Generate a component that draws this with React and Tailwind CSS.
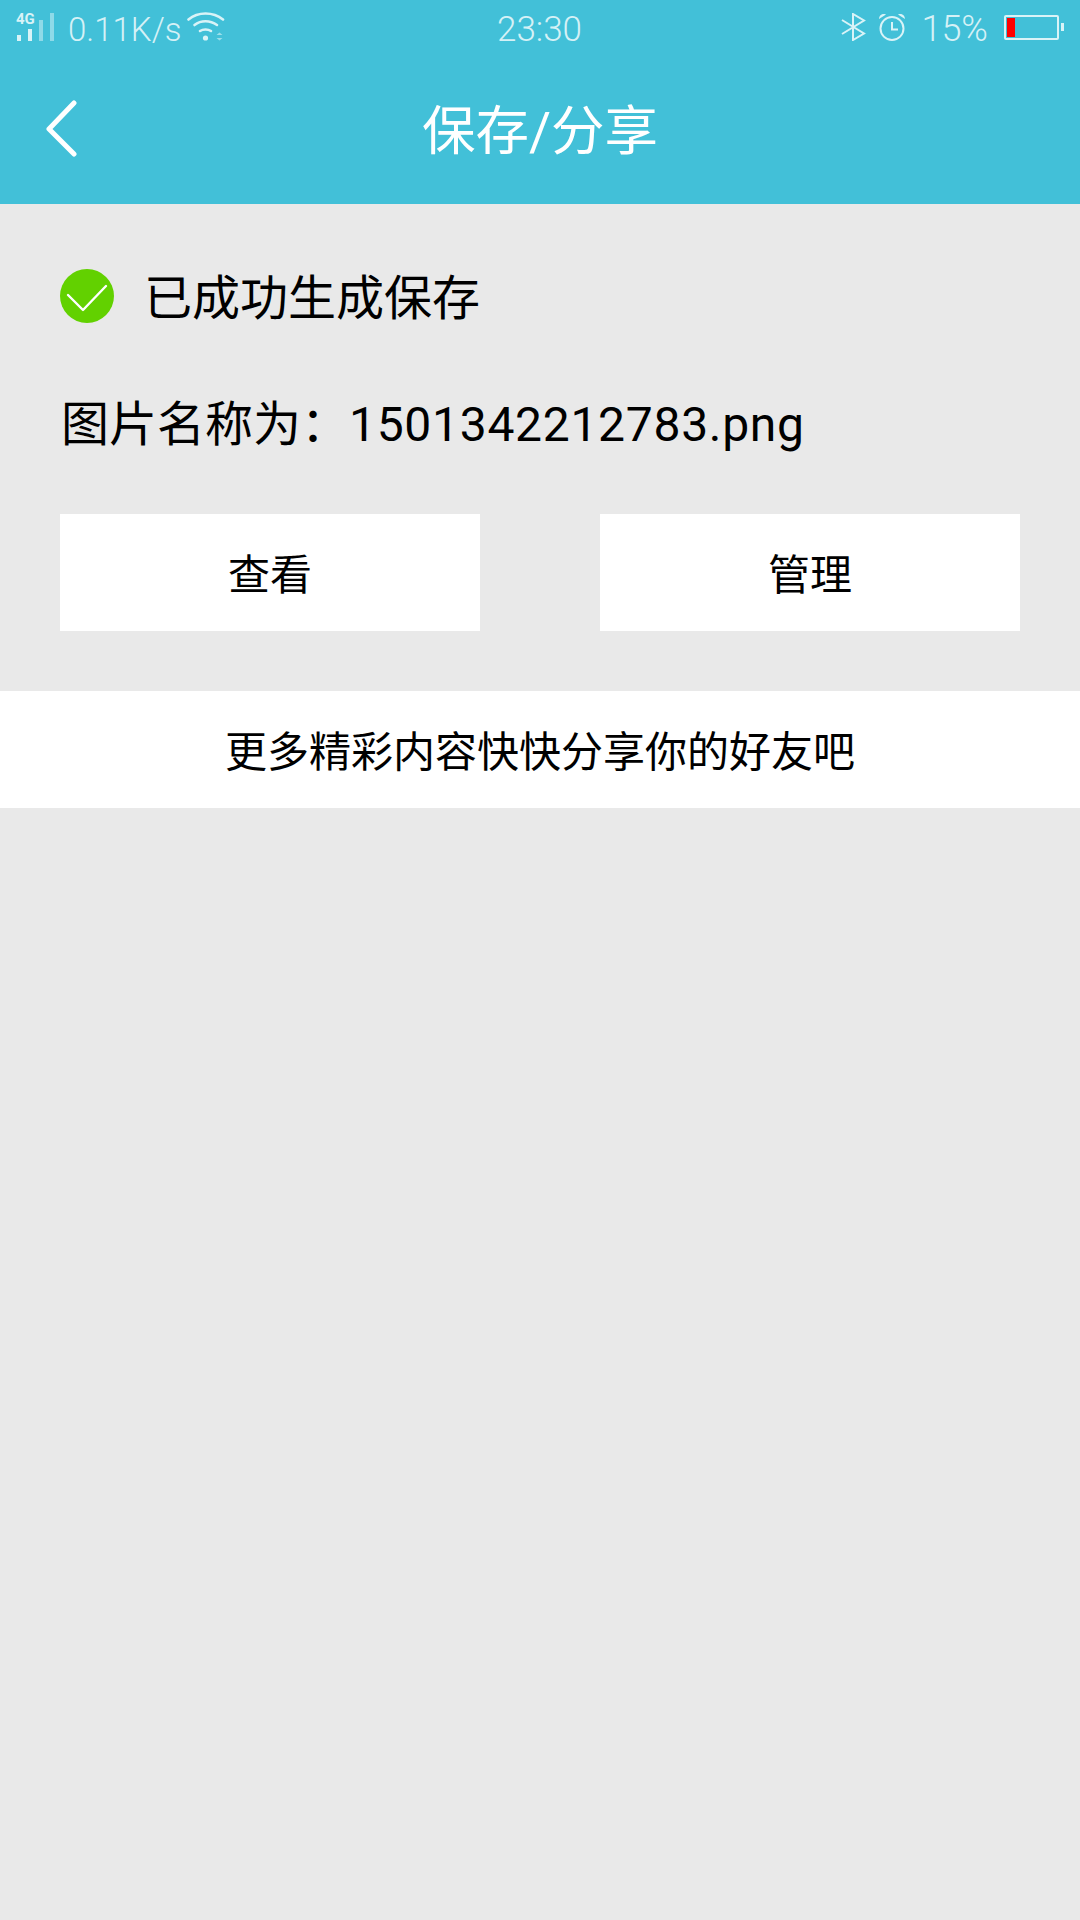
const sans = "font-['Roboto','Noto_Sans_CJK_SC',sans-serif]";

function Signal() {
  return (
    <svg width="40" height="32" viewBox="0 0 40 32" className="text-[#d9f3f7]">
      <text x="1" y="13" fontSize="15" fontWeight="700" fontFamily="Roboto, sans-serif" fill="currentColor">
        4G
      </text>
      <rect x="2" y="24" width="4" height="6" fill="currentColor" />
      <rect x="13" y="18" width="4" height="12" fill="currentColor" />
      <rect x="24" y="9" width="4" height="21" fill="currentColor" opacity="0.5" />
      <rect x="35" y="2" width="4" height="28" fill="currentColor" opacity="0.5" />
    </svg>
  );
}

function Wifi() {
  return (
    <svg width="38" height="30" viewBox="0 0 38 30" fill="none" stroke="#d9f3f7" strokeWidth="2.6" strokeLinecap="round">
      <path d="M1.5 7.5 C11 -0.5 26 -0.5 36 7.5" />
      <path d="M7.5 13 C14 8 23 8 30 13" />
      <path d="M13 19 C16 17 21 17 24 19" />
      <circle cx="18.5" cy="26" r="2.6" fill="#d9f3f7" stroke="none" />
      <path d="M29.5 23 L32.5 20.5 L35.5 23 Z M29.5 26 L32.5 28.5 L35.5 26 Z" fill="#d9f3f7" stroke="none" opacity="0.6" />
    </svg>
  );
}

function Bluetooth() {
  return (
    <svg width="25" height="28" viewBox="0 0 25 28" fill="none" stroke="#d9f3f7" strokeWidth="2">
      <path d="M1 21 L23 7.5 L12 1 V27 L23 20.5 L1 7" />
    </svg>
  );
}

function Alarm() {
  return (
    <svg width="28" height="28" viewBox="0 0 28 28" fill="none" stroke="#d9f3f7" strokeWidth="2">
      <circle cx="14" cy="15.5" r="11.5" />
      <path d="M14 9 V16.5 H20" />
      <path d="M1 6 C1 2 5 0 8 1.5 Z M27 6 C27 2 23 0 20 1.5 Z" fill="#d9f3f7" stroke="none" />
    </svg>
  );
}

function Battery() {
  return (
    <div className="flex items-center">
      <div className="w-[55px] h-[25px] rounded-[2px] border-2 border-[#d9f3f7] p-px">
        <div className="w-[8px] h-[19px] bg-[#ff0000]" />
      </div>
      <div className="w-[3px] h-[8px] ml-[2px] bg-[#d9f3f7]" />
    </div>
  );
}

function StatusBar() {
  return (
    <div className="grid grid-cols-3 items-center h-[54px] pl-[15px] pr-[16px] text-[#d5f1f6] font-light">
      <div className="flex items-center">
        <Signal />
        <span className="ml-[13px] text-[33px] leading-none mt-[4px]">0.11K/s</span>
        <div className="ml-[5px]">
          <Wifi />
        </div>
      </div>
      <div className="text-center text-[35px] leading-none mt-[5px]">23:30</div>
      <div className="flex items-center justify-end">
        <Bluetooth />
        <div className="ml-[12px]">
          <Alarm />
        </div>
        <span className="ml-[15px] text-[36px] leading-none mt-[3px]">15%</span>
        <div className="ml-[16px]">
          <Battery />
        </div>
      </div>
    </div>
  );
}

export default function App() {
  return (
    <div className={`w-[1080px] h-[1920px] bg-[#e9e9e9] text-black flex flex-col ${sans}`}>
      <div className="bg-[#42c0d8] h-[204px] flex flex-col">
        <StatusBar />
        <div className="relative flex-1 flex items-center justify-center">
          <svg width="32" height="58" viewBox="0 0 32 58" fill="none" stroke="#fff" strokeWidth="5" strokeLinecap="round" strokeLinejoin="round" className="absolute left-[45px] top-[46px]">
            <path d="M29 3 L4 29 L29 54" />
          </svg>
          <span className="text-[53.5px] leading-none text-white relative top-[3px]">保存/分享</span>
        </div>
      </div>

      <div className="px-[60px] pt-[65px]">
        <div className="flex items-center h-[54px]">
          <div className="w-[54px] h-[54px] rounded-full bg-[#62d100] flex items-center justify-center">
            <svg width="44" height="32" viewBox="0 0 44 32" fill="none" stroke="#fff" strokeWidth="2.4" strokeLinecap="round" strokeLinejoin="round">
              <path d="M3 15 L18 30 L41 6" />
            </svg>
          </div>
          <span className="ml-[30px] text-[48px] leading-none relative top-[3px]">已成功生成保存</span>
        </div>
        <div className="mt-[78px] text-[48px] leading-none ml-[1px]">
          图片名称为：<span className="tracking-[0.7px]">1501342212783.png</span>
        </div>
        <div className="mt-[65px] flex justify-between">
          <button className="w-[420px] h-[117px] bg-white text-[42px] pt-[6px]">查看</button>
          <button className="w-[420px] h-[117px] bg-white text-[42px] pt-[6px]">管理</button>
        </div>
      </div>

      <div className="mt-[60px] h-[117px] bg-white flex items-center justify-center text-[42px] pt-[6px]">
        更多精彩内容快快分享你的好友吧
      </div>
    </div>
  );
}
